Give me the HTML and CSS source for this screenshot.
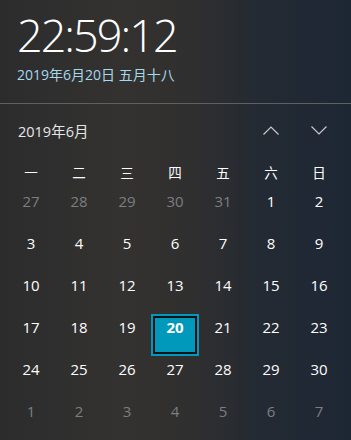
FILE: index.html
```html
<!DOCTYPE html>
<html lang="zh-CN">
<head>
<meta charset="utf-8">
<link rel="stylesheet" href="styles.css">
</head>
<body>
<div class="panel">
  <header class="clock-area">
    <div class="clock">22:59:12</div>
    <div class="date">2019年6月20日 五月十八</div>
  </header>
  <section class="calendar">
    <div class="cal-head">
      <div class="month">2019年6月</div>
      <div class="nav">
        <span class="nav-btn"><svg width="16" height="9" viewBox="0 0 16 9"><path d="M0.5 8.5 L8 1 L15.5 8.5" fill="none" stroke="#c8cacc" stroke-width="1.2"/></svg></span>
        <span class="nav-btn"><svg width="16" height="9" viewBox="0 0 16 9"><path d="M0.5 0.5 L8 8 L15.5 0.5" fill="none" stroke="#c8cacc" stroke-width="1.2"/></svg></span>
      </div>
    </div>
    <div class="weekdays">
      <span>一</span><span>二</span><span>三</span><span>四</span><span>五</span><span>六</span><span>日</span>
    </div>
    <div class="days">
      <span class="day other">27</span><span class="day other">28</span><span class="day other">29</span><span class="day other">30</span><span class="day other">31</span><span class="day">1</span><span class="day">2</span>
      <span class="day">3</span><span class="day">4</span><span class="day">5</span><span class="day">6</span><span class="day">7</span><span class="day">8</span><span class="day">9</span>
      <span class="day">10</span><span class="day">11</span><span class="day">12</span><span class="day">13</span><span class="day">14</span><span class="day">15</span><span class="day">16</span>
      <span class="day">17</span><span class="day">18</span><span class="day">19</span><span class="day today">20</span><span class="day">21</span><span class="day">22</span><span class="day">23</span>
      <span class="day">24</span><span class="day">25</span><span class="day">26</span><span class="day">27</span><span class="day">28</span><span class="day">29</span><span class="day">30</span>
      <span class="day other">1</span><span class="day other">2</span><span class="day other">3</span><span class="day other">4</span><span class="day other">5</span><span class="day other">6</span><span class="day other">7</span>
    </div>
  </section>
</div>
</body>
</html>
```
FILE: styles.css
```css
html, body {
  margin: 0;
  padding: 0;
}
body {
  width: 351px;
  height: 440px;
  overflow: hidden;
  font-family: "Open Sans", "Noto Sans CJK SC", sans-serif;
  color: #ffffff;
  background: linear-gradient(90deg, #2c2c2d 0%, #333230 35%, #302f2f 55%, #232a33 75%, #1d2734 100%);
}
.panel {
  width: 351px;
  height: 440px;
  display: flex;
  flex-direction: column;
}
.clock-area {
  padding: 10px 0 0 17px;
  height: 93px;
  border-bottom: 1px solid #5e6062;
}
.clock {
  font-size: 45px;
  font-weight: 300;
  line-height: 50px;
  letter-spacing: -2px;
}
.date {
  margin-top: 6px;
  font-size: 14px;
  line-height: 18px;
  color: #a6d9ec;
}
.calendar {
  padding: 0 7px;
}
.cal-head {
  display: flex;
  justify-content: space-between;
  align-items: center;
  height: 52px;
  padding-left: 11px;
}
.month {
  font-size: 14.5px;
  color: #e6e6e6;
}
.nav {
  display: flex;
  gap: 32px;
  padding-right: 17px;
}
.nav-btn {
  display: flex;
  width: 16px;
  height: 9px;
}
.weekdays {
  display: grid;
  grid-template-columns: repeat(7, 48px);
  height: 32px;
  align-items: center;
  font-size: 13.5px;
  font-family: "Noto Sans CJK SC", sans-serif;
}
.weekdays span {
  text-align: center;
}
.days {
  display: grid;
  grid-template-columns: repeat(7, 48px);
  grid-auto-rows: 42px;
}
.day {
  text-align: center;
  font-size: 15px;
  line-height: 26px;
  color: #ffffff;
  box-sizing: border-box;
}
.day.other {
  color: #7d7e80;
}
.day.today {
  background: #0099bc;
  border: 2px solid #0099bc;
  box-shadow: inset 0 0 0 2px #0d1216;
  font-weight: 700;
  line-height: 22px;
}
```
